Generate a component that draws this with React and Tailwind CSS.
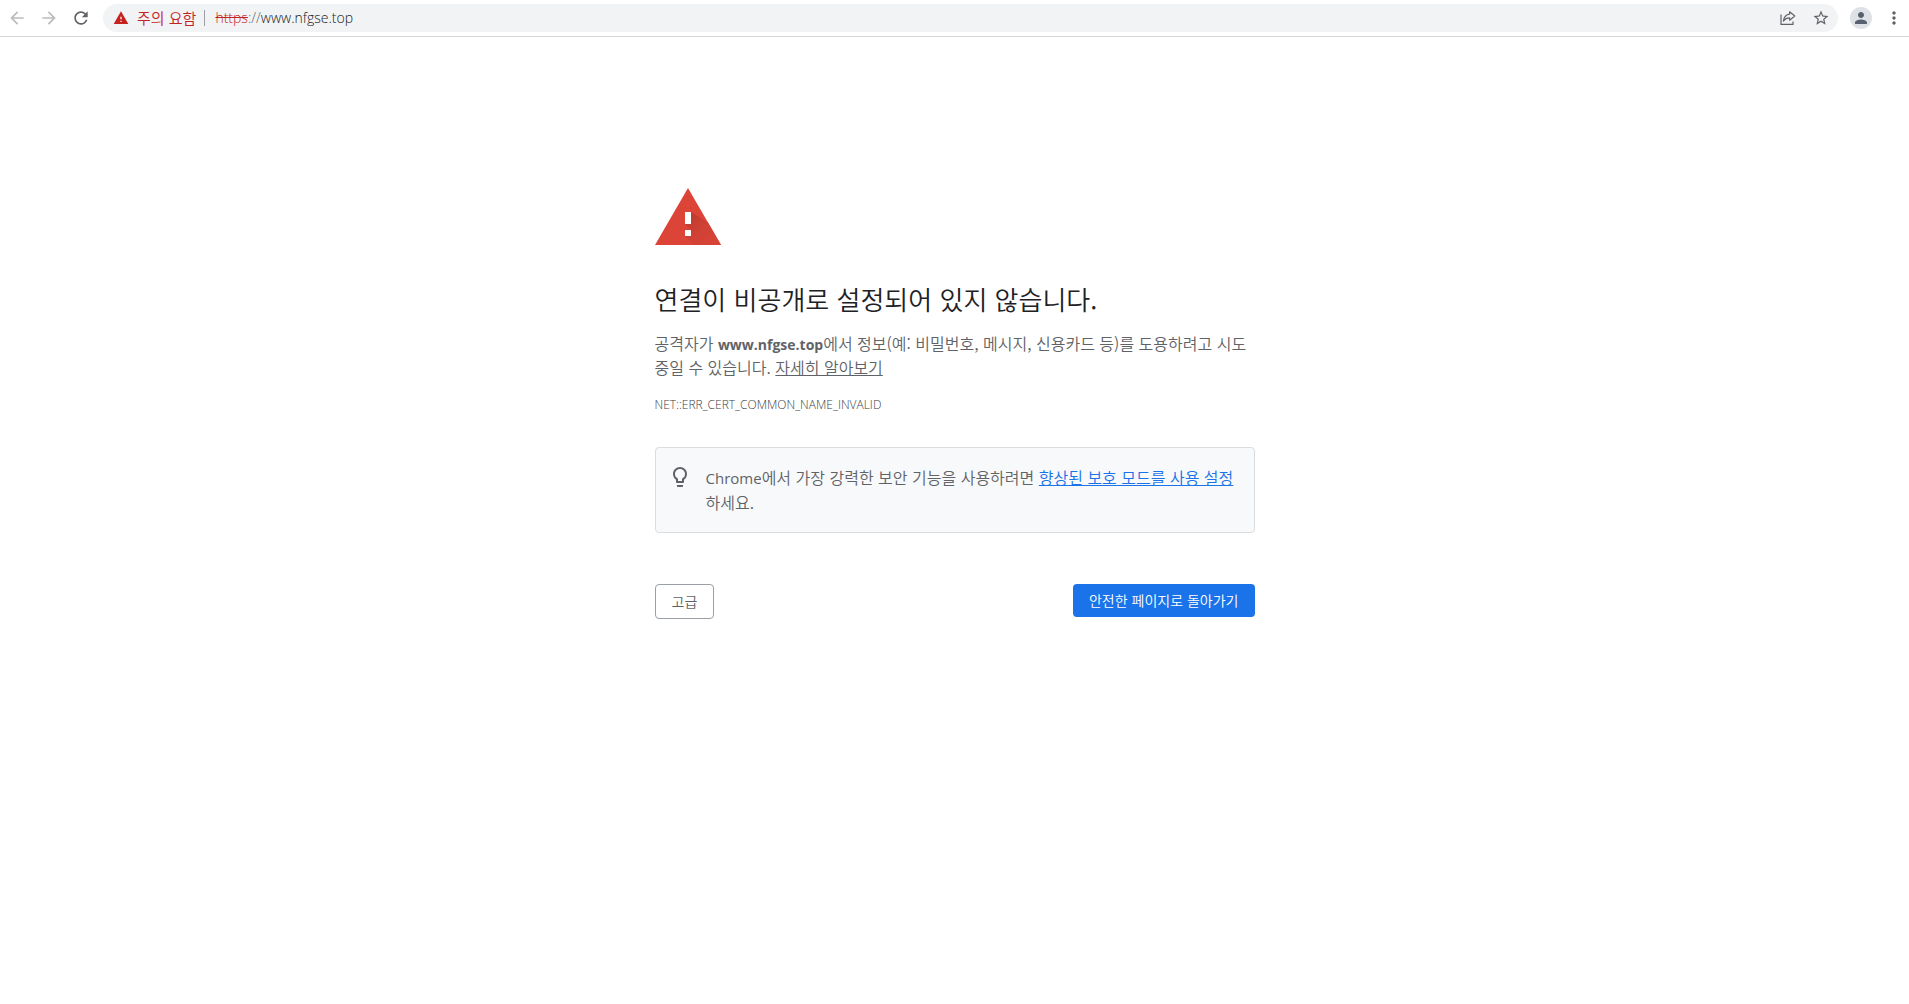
import React from 'react';
import {
    MdArrowBack,
    MdArrowForward,
    MdRefresh,
    MdWarning,
    MdStarBorder,
    MdPerson,
    MdMoreVert,
    MdLightbulbOutline,
} from 'react-icons/md';

const ShareIcon = () => (
    <svg viewBox="0 0 16 16" className="h-4 w-4" fill="none" stroke="#5f6368" strokeWidth="1.2">
        <path d="M1 4.5v9.9h12V11.5" />
        <path d="M9.6 1.8 14.8 6 9.6 10.2V7.9C7 7.9 5 8.8 3.4 11.1 3.9 7.4 6 4.5 9.6 4.1z" strokeLinejoin="round" />
    </svg>
);

const DangerIcon = () => (
    <svg viewBox="0 0 66 57" className="h-[57px] w-[66px]">
        <defs>
            <linearGradient id="shade" x1="33" y1="30" x2="58" y2="55" gradientUnits="userSpaceOnUse">
                <stop offset="0" stopColor="#bf3b2f" />
                <stop offset="0.5" stopColor="#d14135" />
                <stop offset="1" stopColor="#d74337" />
            </linearGradient>
        </defs>
        <path d="M33 0 66 57H0z" fill="#db4437" />
        <path d="M36 24 53 34.5 66 57H39l-9-9 6-6-6-6z" fill="url(#shade)" />
        <path d="M30 24h6v12h-6zM30 42h6v6h-6z" fill="#fff" />
    </svg>
);

const Toolbar = () => (
    <header className="flex h-[37px] items-center border-b border-[#d5d7da] bg-white px-[5px] text-[#5f6368]">
        <nav className="flex items-center gap-2">
            <button aria-label="뒤로" className="flex h-6 w-6 items-center justify-center text-[#babcbe]">
                <MdArrowBack size={20} />
            </button>
            <button aria-label="앞으로" className="flex h-6 w-6 items-center justify-center text-[#babcbe]">
                <MdArrowForward size={20} />
            </button>
            <button aria-label="새로고침" className="flex h-6 w-6 items-center justify-center">
                <MdRefresh size={20} />
            </button>
        </nav>

        <div className="ml-2.5 flex h-7 flex-1 items-center rounded-full bg-[#f1f3f4] pl-2.5 pr-2 text-[15px]">
            <button className="flex items-center gap-2 text-[#c5221f]">
                <MdWarning size={16} />
                주의 요함
            </button>
            <span className="ml-2 mr-2.5 h-4 w-px bg-[#9aa0a6]" />
            <div className="flex-1 font-['Open_Sans',sans-serif] text-sm text-[#202124]">
                <span className="text-[#c5221f] line-through">https</span>
                <span className="text-[#5f6368]">://</span>
                www.nfgse.top
            </div>
            <div className="flex items-center gap-4">
                <button aria-label="공유">
                    <ShareIcon />
                </button>
                <button aria-label="북마크">
                    <MdStarBorder size={18} />
                </button>
            </div>
        </div>

        <button
            aria-label="프로필"
            className="ml-3 flex h-[22px] w-[22px] items-center justify-center rounded-full bg-[#dee1e6] text-[#56606f]"
        >
            <MdPerson size={18} />
        </button>
        <button aria-label="메뉴" className="ml-3 flex h-5 w-5 items-center justify-center">
            <MdMoreVert size={20} />
        </button>
    </header>
);

const App = () => {
    return (
        <div
            lang="ko"
            className="min-h-screen bg-white font-['Noto_Sans_CJK_KR',sans-serif] font-[350] text-[#5f6368]"
        >
            <Toolbar />

            <main className="mx-auto max-w-[600px] pt-[151px] text-base leading-6">
                <DangerIcon />

                <h1 className="mt-[38px] text-[26px] leading-8 font-[350] text-[#202124]">
                    연결이 비공개로 설정되어 있지 않습니다.
                </h1>
                <p className="mt-4">
                    공격자가{' '}
                    <strong className="font-['Open_Sans',sans-serif] text-sm font-bold">www.nfgse.top</strong>에서
                    정보(예: 비밀번호, 메시지, 신용카드 등)를 도용하려고 시도 중일 수 있습니다.{' '}
                    <a href="#learn" className="underline">
                        자세히 알아보기
                    </a>
                </p>
                <p className="mt-3.5 font-['Open_Sans',sans-serif] text-xs leading-6 text-[#3c4043]">
                    NET::ERR_CERT_COMMON_NAME_INVALID
                </p>

                <div className="mt-[30px] flex gap-3.5 rounded border border-[#dadce0] bg-[#f8f9fa] pt-[17px] pr-4 pb-[18px] pl-3">
                    <MdLightbulbOutline size={24} className="shrink-0" />
                    <p>
                        <span className="font-['Open_Sans',sans-serif] text-[15px] font-normal">Chrome</span>에서
                        가장 강력한 보안 기능을 사용하려면{' '}
                        <a href="#enhanced" className="text-[#1a73e8] underline">
                            향상된 보호 모드를 사용 설정
                        </a>
                        하세요.
                    </p>
                </div>

                <div className="mt-[51px] flex items-start justify-between text-sm">
                    <button className="h-[35px] rounded border border-[#9aa0a6] px-4 pb-0.5">고급</button>
                    <button className="h-[33px] rounded bg-[#1a73e8] px-4 pb-0.5 text-white">
                        안전한 페이지로 돌아가기
                    </button>
                </div>
            </main>
        </div>
    );
};

export default App;
